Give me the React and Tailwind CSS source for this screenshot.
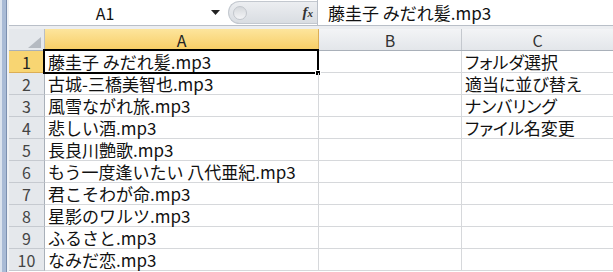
export default function App() {
  const colA = [
    "藤圭子 みだれ髪.mp3",
    "古城-三橋美智也.mp3",
    "風雪ながれ旅.mp3",
    "悲しい酒.mp3",
    "長良川艶歌.mp3",
    "もう一度逢いたい 八代亜紀.mp3",
    "君こそわが命.mp3",
    "星影のワルツ.mp3",
    "ふるさと.mp3",
    "なみだ恋.mp3",
  ];
  const colC = ["フォルダ選択", "適当に並び替え", "ナンバリング", "ファイル名変更", "", "", "", "", "", ""];
  const font = "font-['Noto_Sans_CJK_JP','Noto_Sans',sans-serif]";
  return (
    <div className={`w-[613px] h-[272px] overflow-hidden bg-white flex ${font}`}>
      {/* window frame strip */}
      <div className="flex w-[9px] shrink-0">
        <div className="w-[2px] bg-[#dbe3ee]" />
        <div className="w-[4px] bg-[#a9bbd6]" />
        <div className="w-[1px] bg-[#7c90b0]" />
        <div className="w-[2px] bg-[#eef1f5]" />
      </div>
      <div className="flex-1 flex flex-col min-w-0">
        {/* formula bar */}
        <div className="h-[26px] flex border-b border-[#b9bfc8] bg-white shrink-0">
          <div className="w-[219px] flex items-center shrink-0">
            <div className="w-[192px] text-center text-[16px] leading-none text-[#111]">A1</div>
            <svg className="ml-[10px]" width="9" height="5" viewBox="0 0 9 5">
              <path d="M0 0 H9 L4.5 5 Z" fill="#222" />
            </svg>
          </div>
          <div className="w-[89px] shrink-0 flex items-center rounded-l-full border border-r-0 border-[#c3c8cf] bg-gradient-to-b from-[#eceef1] to-[#d9dde2] my-[1px]">
            <div className="ml-[4px] w-[14px] h-[14px] rounded-full border border-[#c2c6cc] bg-gradient-to-b from-[#d5d8dc] to-[#f4f5f7]" />
            <div className="ml-auto mr-[4px] font-['Liberation_Serif',serif] italic font-bold text-[15px] leading-none text-[#333]">
              f<span className="text-[11px]">x</span>
            </div>
          </div>
          <div className="flex-1 border-l border-[#b9bfc8] flex items-center pl-[10px] text-[17px] leading-none text-[#111] whitespace-nowrap">
            藤圭子 みだれ髪.mp3
          </div>
        </div>
        <div className="h-[3px] bg-[#eceef1] shrink-0" />
        {/* header row */}
        <div className="h-[22px] flex shrink-0 border-b border-[#a9b0b9]">
          <div className="w-[36px] shrink-0 border-r border-[#b9bec6] bg-[#e5e8ec] flex items-end justify-end pr-[3px] pb-[2px]">
            <svg width="13" height="11" viewBox="0 0 13 11">
              <path d="M13 0 V11 H0 Z" fill="#b5bac1" />
            </svg>
          </div>
          <div className="w-[274px] shrink-0 border-r border-[#dcae55] bg-gradient-to-b from-[#fde59c] to-[#f7cd63] flex items-center justify-center text-[16px] leading-none text-[#222]">
            A
          </div>
          <div className="w-[143px] shrink-0 border-r border-[#c4c8ce] bg-gradient-to-b from-[#f3f4f6] to-[#e3e6ea] flex items-center justify-center text-[16px] leading-none text-[#333]">
            B
          </div>
          <div className="flex-1 bg-gradient-to-b from-[#f3f4f6] to-[#e3e6ea] flex items-center justify-center text-[16px] leading-none text-[#333]">
            C
          </div>
        </div>
        {/* rows */}
        {colA.map((a, i) => (
          <div key={i} className="h-[22px] flex shrink-0">
            <div
              className={`w-[36px] shrink-0 border-r border-b flex items-center justify-center text-[16px] leading-none ${
                i === 0
                  ? "bg-[#f8d572] border-[#dcae55] text-[#222]"
                  : "bg-[#e5e8ec] border-r-[#a9b0b9] border-b-[#c6cad0] text-[#444]"
              }`}
            >
              {i + 1}
            </div>
            <div className="w-[274px] shrink-0 border-r border-b border-[#d6d8db] relative flex items-center pl-[3px] text-[17px] leading-none text-[#111] whitespace-nowrap">
              {a}
              {i === 0 && (
                <div className="absolute left-[-2px] top-[-2px] right-[-1px] bottom-[-2px] border-2 border-black">
                  <div className="absolute right-[-4px] bottom-[-4px] w-[6px] h-[6px] bg-black border border-white" />
                </div>
              )}
            </div>
            <div className="w-[143px] shrink-0 border-r border-b border-[#d6d8db]" />
            <div className="flex-1 border-b border-[#d6d8db] flex items-center pl-[3px] text-[17px] leading-none text-[#111] whitespace-nowrap [font-feature-settings:'palt']">
              {colC[i]}
            </div>
          </div>
        ))}
      </div>
    </div>
  );
}
